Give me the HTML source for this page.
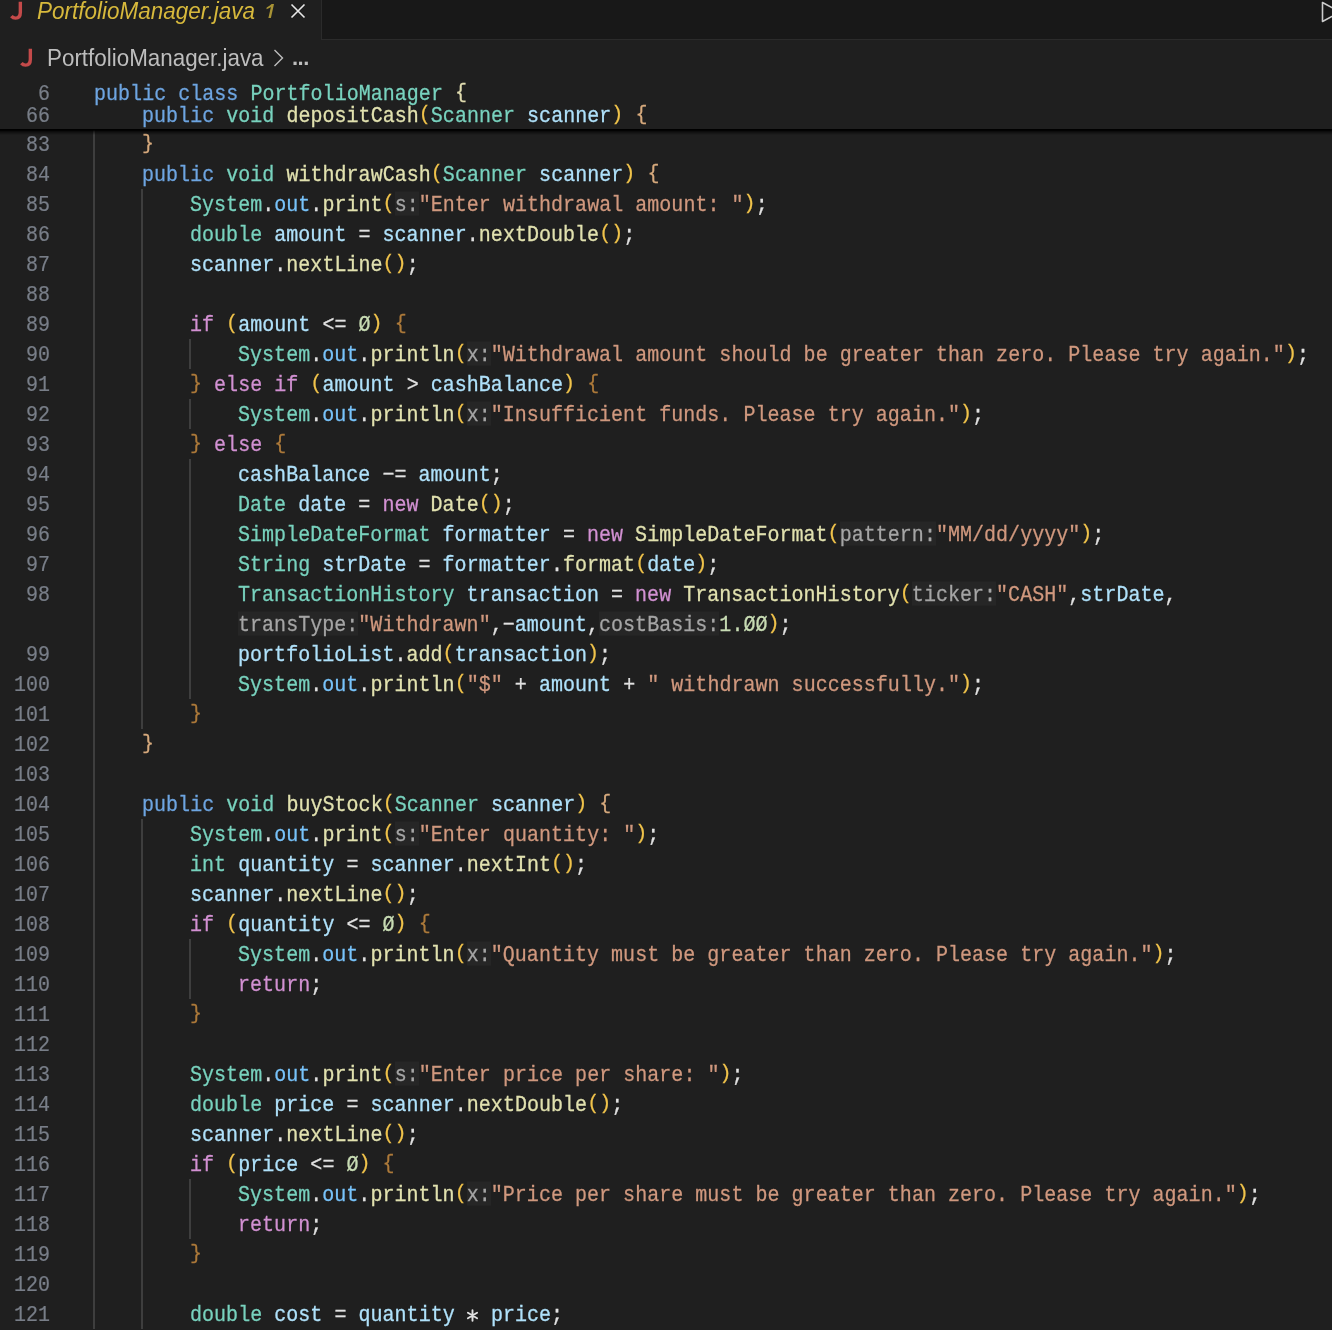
<!DOCTYPE html>
<html><head><meta charset="utf-8">
<style>
html,body{margin:0;padding:0;}
body{width:1332px;height:1330px;background:#1f1f1f;position:relative;overflow:hidden;font-family:"Liberation Mono",monospace;}
.tabbar{position:absolute;left:0;top:0;width:1332px;height:39px;background:#181818;border-bottom:1px solid #2b2b2b;}
.tab{position:absolute;left:0;top:0;width:321px;height:40px;background:#1f1f1f;border-right:1px solid #2b2b2b;}
.tabj{position:absolute;left:9.5px;top:-4px;line-height:30px;font-family:"Liberation Sans",sans-serif;font-size:24px;color:#c85050;-webkit-text-stroke:0.6px #c85050;will-change:transform;}
.tabt{position:absolute;left:37px;top:-3px;line-height:26px;font-family:"Liberation Sans",sans-serif;font-style:italic;font-size:22.5px;color:#d7b93c;white-space:pre;transform:scaleY(1.08);transform-origin:0 0;will-change:transform;}
.tab1{position:absolute;left:265px;top:-1px;line-height:26px;font-family:"Liberation Sans",sans-serif;font-style:italic;font-size:20px;color:#b89a38;-webkit-text-stroke:0.4px #b89a38;will-change:transform;}
.tabx{position:absolute;left:290px;top:3px;width:16px;height:16px;}
.run{position:absolute;left:1320px;top:0.5px;}
.bc{position:absolute;left:0;top:40px;width:1332px;height:36px;}
.bcj{position:absolute;left:19.5px;top:43px;line-height:30px;font-family:"Liberation Sans",sans-serif;font-size:24px;color:#c85050;-webkit-text-stroke:0.6px #c85050;will-change:transform;}
.bct{position:absolute;left:47px;top:44px;line-height:26px;font-family:"Liberation Sans",sans-serif;font-size:22.4px;color:#bebebe;white-space:pre;transform:scaleY(1.08);transform-origin:0 0;will-change:transform;}
.ln{position:absolute;left:0;width:50px;text-align:right;height:30px;line-height:30px;font-size:20px;color:#787e88;transform:scaleY(1.14);transform-origin:0 7.5px;will-change:transform;-webkit-text-stroke:0.2px #787e88;}
.cd{position:absolute;height:30px;line-height:30px;font-size:20px;letter-spacing:0.03px;white-space:pre;color:#d4d4d4;transform:scaleY(1.1);transform-origin:0 -3px;will-change:transform;}
.cd span{-webkit-text-stroke:0.25px currentColor;}
.g{position:absolute;width:2px;background:#3e3e3e;}
.sticky{position:absolute;left:0;top:76px;width:1332px;height:53px;background:#1f1f1f;}
.shadow{position:absolute;left:0;top:129px;width:1332px;height:6px;background:linear-gradient(#000 0%,#000 18%,rgba(0,0,0,0.55) 45%,rgba(0,0,0,0) 100%);}
.k{color:#6ea5e1}.t{color:#78d2be}.f{color:#e1e1af}.v{color:#afe1fa}.c{color:#78c3fa}.s{color:#d0987e}.n{color:#c8dcb4}.p{color:#d291d2}.o{color:#e1e1e1}
.P{color:#f0c34b}.B1{color:#e0dcb0}.B2{color:#d7aa7d}.B3{color:#ad7a3a}
.P,.B1,.B2,.B3{display:inline-block;transform:scaleY(0.93);transform-origin:0 -8px;}
.ast{color:transparent;-webkit-text-stroke:0 !important;}
.h{color:#a5a5a5;position:relative;}
.h::before{content:"";position:absolute;left:0;right:0;top:-1px;height:21.5px;background:#262626;z-index:-1;}
</style></head><body>
<div class="g" style="left:93px;top:129px;height:1200px"></div>
<div class="g" style="left:141px;top:189px;height:540px"></div>
<div class="g" style="left:141px;top:819px;height:510px"></div>
<div class="g" style="left:189px;top:339px;height:30px"></div>
<div class="g" style="left:189px;top:399px;height:30px"></div>
<div class="g" style="left:189px;top:459px;height:240px"></div>
<div class="g" style="left:189px;top:939px;height:60px"></div>
<div class="g" style="left:189px;top:1179px;height:60px"></div>
<div class="ln" style="top:129px">83</div>
<div class="cd" style="top:129px;left:142px"><span class="B2">}</span></div>
<div class="ln" style="top:159px">84</div>
<div class="cd" style="top:159px;left:142px"><span class="k">public </span><span class="t">void </span><span class="f">withdrawCash</span><span class="P">(</span><span class="t">Scanner </span><span class="v">scanner</span><span class="P">) </span><span class="B2">{</span></div>
<div class="ln" style="top:189px">85</div>
<div class="cd" style="top:189px;left:190px"><span class="t">System</span><span class="o">.</span><span class="c">out</span><span class="o">.</span><span class="f">print</span><span class="P">(</span><span class="h">s:</span><span class="s">&quot;Enter withdrawal amount: &quot;</span><span class="P">)</span><span class="o">;</span></div>
<div class="ln" style="top:219px">86</div>
<div class="cd" style="top:219px;left:190px"><span class="t">double </span><span class="v">amount </span><span class="o">= </span><span class="v">scanner</span><span class="o">.</span><span class="f">nextDouble</span><span class="P">()</span><span class="o">;</span></div>
<div class="ln" style="top:249px">87</div>
<div class="cd" style="top:249px;left:190px"><span class="v">scanner</span><span class="o">.</span><span class="f">nextLine</span><span class="P">()</span><span class="o">;</span></div>
<div class="ln" style="top:279px">88</div>
<div class="ln" style="top:309px">89</div>
<div class="cd" style="top:309px;left:190px"><span class="p">if </span><span class="P">(</span><span class="v">amount </span><span class="o">&lt;= </span><span class="n">Ø</span><span class="P">) </span><span class="B3">{</span></div>
<div class="ln" style="top:339px">90</div>
<div class="cd" style="top:339px;left:238px"><span class="t">System</span><span class="o">.</span><span class="c">out</span><span class="o">.</span><span class="f">println</span><span class="P">(</span><span class="h">x:</span><span class="s">&quot;Withdrawal amount should be greater than zero. Please try again.&quot;</span><span class="P">)</span><span class="o">;</span></div>
<div class="ln" style="top:369px">91</div>
<div class="cd" style="top:369px;left:190px"><span class="B3">} </span><span class="p">else if </span><span class="P">(</span><span class="v">amount </span><span class="o">&gt; </span><span class="v">cashBalance</span><span class="P">) </span><span class="B3">{</span></div>
<div class="ln" style="top:399px">92</div>
<div class="cd" style="top:399px;left:238px"><span class="t">System</span><span class="o">.</span><span class="c">out</span><span class="o">.</span><span class="f">println</span><span class="P">(</span><span class="h">x:</span><span class="s">&quot;Insufficient funds. Please try again.&quot;</span><span class="P">)</span><span class="o">;</span></div>
<div class="ln" style="top:429px">93</div>
<div class="cd" style="top:429px;left:190px"><span class="B3">} </span><span class="p">else </span><span class="B3">{</span></div>
<div class="ln" style="top:459px">94</div>
<div class="cd" style="top:459px;left:238px"><span class="v">cashBalance </span><span class="o">−= </span><span class="v">amount</span><span class="o">;</span></div>
<div class="ln" style="top:489px">95</div>
<div class="cd" style="top:489px;left:238px"><span class="t">Date </span><span class="v">date </span><span class="o">= </span><span class="p">new </span><span class="f">Date</span><span class="P">()</span><span class="o">;</span></div>
<div class="ln" style="top:519px">96</div>
<div class="cd" style="top:519px;left:238px"><span class="t">SimpleDateFormat </span><span class="v">formatter </span><span class="o">= </span><span class="p">new </span><span class="f">SimpleDateFormat</span><span class="P">(</span><span class="h">pattern:</span><span class="s">&quot;MM/dd/yyyy&quot;</span><span class="P">)</span><span class="o">;</span></div>
<div class="ln" style="top:549px">97</div>
<div class="cd" style="top:549px;left:238px"><span class="t">String </span><span class="v">strDate </span><span class="o">= </span><span class="v">formatter</span><span class="o">.</span><span class="f">format</span><span class="P">(</span><span class="v">date</span><span class="P">)</span><span class="o">;</span></div>
<div class="ln" style="top:579px">98</div>
<div class="cd" style="top:579px;left:238px"><span class="t">TransactionHistory </span><span class="v">transaction </span><span class="o">= </span><span class="p">new </span><span class="f">TransactionHistory</span><span class="P">(</span><span class="h">ticker:</span><span class="s">&quot;CASH&quot;</span><span class="o">,</span><span class="v">strDate</span><span class="o">,</span></div>
<div class="ln" style="top:609px"></div>
<div class="cd" style="top:609px;left:238px"><span class="h">transType:</span><span class="s">&quot;Withdrawn&quot;</span><span class="o">,−</span><span class="v">amount</span><span class="o">,</span><span class="h">costBasis:</span><span class="n">1.ØØ</span><span class="P">)</span><span class="o">;</span></div>
<div class="ln" style="top:639px">99</div>
<div class="cd" style="top:639px;left:238px"><span class="v">portfolioList</span><span class="o">.</span><span class="f">add</span><span class="P">(</span><span class="v">transaction</span><span class="P">)</span><span class="o">;</span></div>
<div class="ln" style="top:669px">100</div>
<div class="cd" style="top:669px;left:238px"><span class="t">System</span><span class="o">.</span><span class="c">out</span><span class="o">.</span><span class="f">println</span><span class="P">(</span><span class="s">&quot;$&quot; </span><span class="o">+ </span><span class="v">amount </span><span class="o">+ </span><span class="s">&quot; withdrawn successfully.&quot;</span><span class="P">)</span><span class="o">;</span></div>
<div class="ln" style="top:699px">101</div>
<div class="cd" style="top:699px;left:190px"><span class="B3">}</span></div>
<div class="ln" style="top:729px">102</div>
<div class="cd" style="top:729px;left:142px"><span class="B2">}</span></div>
<div class="ln" style="top:759px">103</div>
<div class="ln" style="top:789px">104</div>
<div class="cd" style="top:789px;left:142px"><span class="k">public </span><span class="t">void </span><span class="f">buyStock</span><span class="P">(</span><span class="t">Scanner </span><span class="v">scanner</span><span class="P">) </span><span class="B2">{</span></div>
<div class="ln" style="top:819px">105</div>
<div class="cd" style="top:819px;left:190px"><span class="t">System</span><span class="o">.</span><span class="c">out</span><span class="o">.</span><span class="f">print</span><span class="P">(</span><span class="h">s:</span><span class="s">&quot;Enter quantity: &quot;</span><span class="P">)</span><span class="o">;</span></div>
<div class="ln" style="top:849px">106</div>
<div class="cd" style="top:849px;left:190px"><span class="t">int </span><span class="v">quantity </span><span class="o">= </span><span class="v">scanner</span><span class="o">.</span><span class="f">nextInt</span><span class="P">()</span><span class="o">;</span></div>
<div class="ln" style="top:879px">107</div>
<div class="cd" style="top:879px;left:190px"><span class="v">scanner</span><span class="o">.</span><span class="f">nextLine</span><span class="P">()</span><span class="o">;</span></div>
<div class="ln" style="top:909px">108</div>
<div class="cd" style="top:909px;left:190px"><span class="p">if </span><span class="P">(</span><span class="v">quantity </span><span class="o">&lt;= </span><span class="n">Ø</span><span class="P">) </span><span class="B3">{</span></div>
<div class="ln" style="top:939px">109</div>
<div class="cd" style="top:939px;left:238px"><span class="t">System</span><span class="o">.</span><span class="c">out</span><span class="o">.</span><span class="f">println</span><span class="P">(</span><span class="h">x:</span><span class="s">&quot;Quantity must be greater than zero. Please try again.&quot;</span><span class="P">)</span><span class="o">;</span></div>
<div class="ln" style="top:969px">110</div>
<div class="cd" style="top:969px;left:238px"><span class="p">return</span><span class="o">;</span></div>
<div class="ln" style="top:999px">111</div>
<div class="cd" style="top:999px;left:190px"><span class="B3">}</span></div>
<div class="ln" style="top:1029px">112</div>
<div class="ln" style="top:1059px">113</div>
<div class="cd" style="top:1059px;left:190px"><span class="t">System</span><span class="o">.</span><span class="c">out</span><span class="o">.</span><span class="f">print</span><span class="P">(</span><span class="h">s:</span><span class="s">&quot;Enter price per share: &quot;</span><span class="P">)</span><span class="o">;</span></div>
<div class="ln" style="top:1089px">114</div>
<div class="cd" style="top:1089px;left:190px"><span class="t">double </span><span class="v">price </span><span class="o">= </span><span class="v">scanner</span><span class="o">.</span><span class="f">nextDouble</span><span class="P">()</span><span class="o">;</span></div>
<div class="ln" style="top:1119px">115</div>
<div class="cd" style="top:1119px;left:190px"><span class="v">scanner</span><span class="o">.</span><span class="f">nextLine</span><span class="P">()</span><span class="o">;</span></div>
<div class="ln" style="top:1149px">116</div>
<div class="cd" style="top:1149px;left:190px"><span class="p">if </span><span class="P">(</span><span class="v">price </span><span class="o">&lt;= </span><span class="n">Ø</span><span class="P">) </span><span class="B3">{</span></div>
<div class="ln" style="top:1179px">117</div>
<div class="cd" style="top:1179px;left:238px"><span class="t">System</span><span class="o">.</span><span class="c">out</span><span class="o">.</span><span class="f">println</span><span class="P">(</span><span class="h">x:</span><span class="s">&quot;Price per share must be greater than zero. Please try again.&quot;</span><span class="P">)</span><span class="o">;</span></div>
<div class="ln" style="top:1209px">118</div>
<div class="cd" style="top:1209px;left:238px"><span class="p">return</span><span class="o">;</span></div>
<div class="ln" style="top:1239px">119</div>
<div class="cd" style="top:1239px;left:190px"><span class="B3">}</span></div>
<div class="ln" style="top:1269px">120</div>
<div class="ln" style="top:1299px">121</div>
<div class="cd" style="top:1299px;left:190px"><span class="t">double </span><span class="v">cost </span><span class="o">= </span><span class="v">quantity </span><span class="ast">*</span><span class="o"> </span><span class="v">price</span><span class="o">;</span></div>
<div class="sticky">
<div class="ln" style="top:2.0px">6</div>
<div class="cd" style="top:2.0px;left:94px"><span class="k">public class </span><span class="t">PortfolioManager </span><span class="B1">{</span></div>
<div class="ln" style="top:24.0px">66</div>
<div class="cd" style="top:24.0px;left:142px"><span class="k">public </span><span class="t">void </span><span class="f">depositCash</span><span class="P">(</span><span class="t">Scanner </span><span class="v">scanner</span><span class="P">) </span><span class="B2">{</span></div>
</div>
<div class="shadow"></div>
<svg style="position:absolute;left:464px;top:1307px" width="17" height="17" viewBox="-8.5 -8.5 17 17"><path d="M0 -5.2V5.2M-4.6 -2.7L4.6 2.7M-4.6 2.7L4.6 -2.7" stroke="#e1e1e1" stroke-width="1.9" stroke-linecap="round" fill="none"/></svg>
<div class="tabbar"></div>
<div class="tab"></div>
<svg style="position:absolute;left:8px;top:0px" width="16" height="22" viewBox="0 0 16 22"><path d="M12.35 1.8V12.3Q12.35 18.15 7.6 18.15Q5 18.15 3.4 16.2" stroke="#c44a4a" stroke-width="3.4" fill="none"/></svg>
<div class="tabt">PortfolioManager.java</div>
<svg style="position:absolute;left:260px;top:0px" width="20" height="24" viewBox="260 0 20 24"><path d="M274 4L270.9 18H268.4L270.9 6.9Q269 8.3 266.4 9.2L266.7 7.4Q269.8 6 271.6 4Z" fill="#a89335"/></svg>
<svg class="tabx" viewBox="0 0 16 16"><path d="M1.5 1.5L14.5 14.5M14.5 1.5L1.5 14.5" stroke="#e8e8e8" stroke-width="1.6" fill="none"/></svg>
<svg class="run" width="12" height="22" viewBox="0 0 12 22"><path d="M2.5 1.5L2.5 20.5L20 11Z" stroke="#cccccc" stroke-width="1.6" fill="none" stroke-linejoin="round"/></svg>
<div class="bc"></div>
<svg style="position:absolute;left:18px;top:46.8px" width="16" height="22" viewBox="0 0 16 22"><path d="M12.35 1.8V12.3Q12.35 18.15 7.6 18.15Q5 18.15 3.4 16.2" stroke="#c44a4a" stroke-width="3.4" fill="none"/></svg>
<div class="bct">PortfolioManager.java</div>
<svg style="position:absolute;left:272px;top:48px" width="14" height="20" viewBox="0 0 14 20"><path d="M2.5 2L10.5 10L2.5 18" stroke="#bebebe" stroke-width="1.4" fill="none"/></svg>
<div style="position:absolute;left:292px;top:45px;font-family:'Liberation Sans',sans-serif;font-size:22px;font-weight:bold;color:#bebebe;letter-spacing:-0.5px;will-change:transform;">...</div>
</body></html>
